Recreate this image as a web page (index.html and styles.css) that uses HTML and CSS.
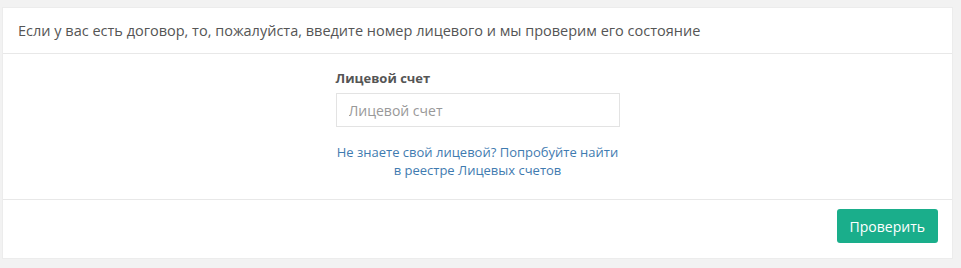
FILE: index.html
```html
<!DOCTYPE html>
<html lang="ru">
<head>
    <meta charset="UTF-8">
    <meta name="viewport" content="width=device-width, initial-scale=1.0">
    <title>Проверка лицевого счета</title>
    <link rel="stylesheet" href="styles.css">
</head>
<body>

<div class="page">
    <div class="panel">
        <div class="panel-heading">
            Если у вас есть договор, то, пожалуйста, введите номер лицевого и мы проверим его состояние
        </div>

        <div class="panel-body">
            <div class="form-group">
                <label class="control-label" for="account">Лицевой счет</label>
                <input class="form-control" id="account" type="text" placeholder="Лицевой счет">
            </div>
            <a class="registry-link" href="#">Не знаете свой лицевой? Попробуйте найти<br>в реестре Лицевых счетов</a>
        </div>

        <div class="panel-footer">
            <button class="btn-check" type="button">Проверить</button>
        </div>
    </div>
</div>

</body>
</html>
```

FILE: styles.css
```css
body {
    font-family: 'Open Sans', 'Noto Sans', sans-serif;
    background-color: #f2f2f2;
    color: #555;
    margin: 0;
    padding: 0;
}

.page {
    padding: 7px 8px 10px 2px;
}

.panel {
    background-color: #fff;
    border: 1px solid #ececec;
}

.panel-heading {
    font-size: 14.5px;
    line-height: 20px;
    padding: 13px 15px 12px;
    border-bottom: 1px solid #e8e8e8;
    color: #555;
}

.panel-body {
    display: flex;
    flex-direction: column;
    align-items: center;
    padding: 15px 0 20px;
    border-bottom: 1px solid #e8e8e8;
}

.form-group {
    display: flex;
    flex-direction: column;
    width: 284px;
}

.control-label {
    font-size: 13px;
    font-weight: bold;
    line-height: 18px;
    color: #555;
    margin-bottom: 6px;
}

.form-control {
    height: 34px;
    box-sizing: border-box;
    border: 1px solid #e3e3e3;
    padding: 6px 12px;
    font-family: inherit;
    font-size: 14px;
    color: #555;
    outline: none;
}

.form-control::placeholder {
    color: #999;
}

.registry-link {
    margin-top: 16px;
    font-size: 13px;
    line-height: 18px;
    text-align: center;
    color: #3f7bb0;
    text-decoration: none;
}

.panel-footer {
    display: flex;
    justify-content: flex-end;
    padding: 9px 14px 15px;
}

.btn-check {
    background-color: #1aae8b;
    color: #fff;
    border: none;
    border-radius: 3px;
    padding: 0 13px;
    height: 34px;
    font-family: inherit;
    font-size: 14px;
    cursor: pointer;
}
```
